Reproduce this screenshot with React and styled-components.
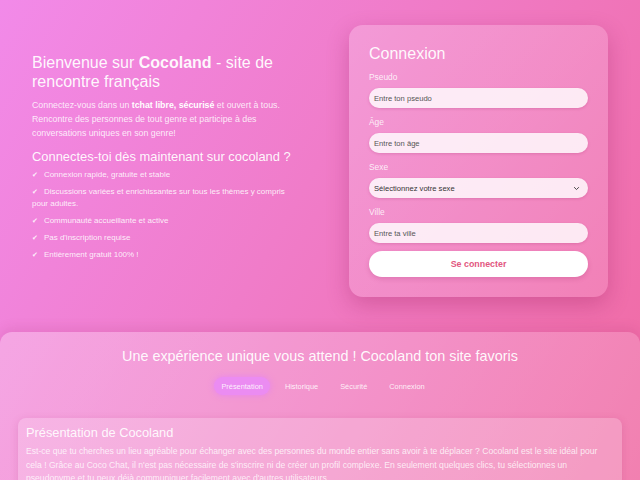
import React from "react";
import styled, { createGlobalStyle } from "styled-components";

const Global = createGlobalStyle`
  html, body { margin: 0; padding: 0; }
  body {
    font-family: "Liberation Sans", Arial, sans-serif;
    background: linear-gradient(120deg, #f28ae9 0%, #f07cc9 45%, #f06aa2 100%);
    background-attachment: fixed;
    min-height: 100vh;
    color: #fff;
    overflow: hidden;
  }
  * { box-sizing: border-box; }
`;

const Page = styled.div`
  width: 640px;
  min-height: 480px;
`;

const Hero = styled.section`
  display: flex;
  justify-content: space-between;
  align-items: flex-start;
  padding: 25px 32px 35px 32px;
`;

const Intro = styled.div`
  width: 262px;
  margin-top: 28px;
`;

const Title = styled.h1`
  margin: 0 0 7px;
  font-size: 16px;
  line-height: 19px;
  font-weight: 400;
  white-space: nowrap;
  color: rgba(255, 255, 255, 0.95);
  b { font-weight: 700; }
`;

const Lead = styled.p`
  margin: 0 0 8px;
  font-size: 8.8px;
  line-height: 14px;
  color: rgba(255, 255, 255, 0.85);
  b { font-weight: 700; color: #fff; }
`;

const SubTitle = styled.h2`
  margin: 0 0 3px;
  font-size: 12.9px;
  line-height: 18px;
  font-weight: 400;
  white-space: nowrap;
  color: rgba(255, 255, 255, 0.95);
`;

const List = styled.ul`
  list-style: none;
  margin: 0;
  padding: 0;
  display: flex;
  flex-direction: column;
  gap: 5px;
`;

const Item = styled.li`
  font-size: 8px;
  line-height: 12px;
  color: rgba(255, 255, 255, 0.88);
  &::before {
    content: "✔";
    margin-right: 6px;
    font-family: "DejaVu Sans", sans-serif;
    font-size: 7px;
  }
`;

const Card = styled.div`
  width: 259px;
  padding: 19px 20px 20px;
  border-radius: 14px;
  background: linear-gradient(135deg, rgba(255,255,255,0.22), rgba(255,255,255,0.12));
  box-shadow: 0 8px 22px rgba(150, 30, 90, 0.3);
`;

const CardTitle = styled.h2`
  margin: 0 0 8px;
  font-size: 16px;
  line-height: 20px;
  font-weight: 400;
  color: rgba(255, 255, 255, 0.95);
`;

const Form = styled.form`
  display: flex;
  flex-direction: column;
`;

const Label = styled.label`
  font-size: 8.4px;
  line-height: 10px;
  color: rgba(255, 255, 255, 0.85);
  margin: ${(p) => (p.$first ? "0" : "9px")} 0 6px;
`;

const Field = styled.div`
  height: 20px;
  border-radius: 10px;
  background: rgba(255, 255, 255, 0.82);
  box-shadow: 0 1px 3px rgba(150, 30, 90, 0.2);
  display: flex;
  align-items: center;
  justify-content: space-between;
  padding: 0 8px 0 5px;
  font-size: 7.6px;
  color: ${(p) => (p.$select ? "#333" : "#555")};
`;

const Chevron = styled.svg`
  width: 7px;
  height: 7px;
`;

const Button = styled.button`
  margin-top: 8px;
  height: 26px;
  border: none;
  border-radius: 13px;
  background: #fff;
  color: #e2577f;
  font-family: "Liberation Sans", Arial, sans-serif;
  font-weight: 700;
  font-size: 8.9px;
  box-shadow: 0 2px 5px rgba(150, 30, 90, 0.2);
`;

const Section = styled.section`
  border-radius: 12px 12px 0 0;
  background: linear-gradient(120deg, rgba(255,255,255,0.28), rgba(255,255,255,0.15));
  box-shadow: 0 -4px 12px rgba(150, 30, 90, 0.12);
  padding: 14px 18px 0;
  height: 148px;
  overflow: hidden;
`;

const SectionTitle = styled.h2`
  margin: 0;
  text-align: center;
  font-size: 14.4px;
  line-height: 20px;
  font-weight: 400;
  color: rgba(255, 255, 255, 0.95);
`;

const Tabs = styled.div`
  display: flex;
  justify-content: center;
  gap: 8px;
  margin: 11px 0 23px;
  padding-left: 6px;
`;

const Tab = styled.div`
  height: 18px;
  padding: 0 7px;
  border-radius: 9px;
  display: flex;
  align-items: center;
  font-size: 7.4px;
  color: rgba(255, 255, 255, 0.88);
  background: ${(p) => (p.$active ? "#eb8cf2" : "transparent")};
  box-shadow: ${(p) => (p.$active ? "0 0 6px rgba(230, 130, 245, 0.9)" : "none")};
`;

const Panel = styled.div`
  border-radius: 8px 8px 0 0;
  background: rgba(255, 255, 255, 0.2);
  box-shadow: 0 2px 8px rgba(150, 30, 90, 0.15);
  padding: 6px 8px 8px;
`;

const PanelTitle = styled.h3`
  margin: 0 0 3px;
  font-size: 12.8px;
  line-height: 18px;
  font-weight: 400;
  color: rgba(255, 255, 255, 0.92);
`;

const PanelText = styled.p`
  margin: 0;
  font-size: 8.6px;
  line-height: 13.5px;
  color: rgba(255, 255, 255, 0.8);
`;

export default function App() {
  return (
    <Page>
      <Global />
      <Hero>
        <Intro>
          <Title>
            Bienvenue sur <b>Cocoland</b> - site de
            <br />
            rencontre français
          </Title>
          <Lead>
            Connectez-vous dans un <b>tchat libre, sécurisé</b> et ouvert à tous.
            Rencontre des personnes de tout genre et participe à des
            conversations uniques en son genre!
          </Lead>
          <SubTitle>Connectes-toi dès maintenant sur cocoland ?</SubTitle>
          <List>
            <Item>Connexion rapide, gratuite et stable</Item>
            <Item>
              Discussions variées et enrichissantes sur tous les thèmes y compris
              pour adultes.
            </Item>
            <Item>Communauté accueillante et active</Item>
            <Item>Pas d'inscription requise</Item>
            <Item>Entièrement gratuit 100% !</Item>
          </List>
        </Intro>
        <Card>
          <CardTitle>Connexion</CardTitle>
          <Form onSubmit={(e) => e.preventDefault()}>
            <Label $first>Pseudo</Label>
            <Field>Entre ton pseudo</Field>
            <Label>Âge</Label>
            <Field>Entre ton âge</Field>
            <Label>Sexe</Label>
            <Field $select>
              Sélectionnez votre sexe
              <Chevron viewBox="0 0 10 10">
                <path d="M2 3.5 L5 6.5 L8 3.5" fill="none" stroke="#444" strokeWidth="1.4" strokeLinecap="round" strokeLinejoin="round" />
              </Chevron>
            </Field>
            <Label>Ville</Label>
            <Field>Entre ta ville</Field>
            <Button type="submit">Se connecter</Button>
          </Form>
        </Card>
      </Hero>
      <Section>
        <SectionTitle>Une expérience unique vous attend ! Cocoland ton site favoris</SectionTitle>
        <Tabs>
          <Tab $active>Présentation</Tab>
          <Tab>Historique</Tab>
          <Tab>Sécurité</Tab>
          <Tab>Connexion</Tab>
        </Tabs>
        <Panel>
          <PanelTitle>Présentation de Cocoland</PanelTitle>
          <PanelText>
            Est-ce que tu cherches un lieu agréable pour échanger avec des personnes du
            monde entier sans avoir à te déplacer ? Cocoland est le site idéal pour
            cela ! Grâce au Coco Chat, il n'est pas nécessaire de s'inscrire ni de créer
            un profil complexe. En seulement quelques clics, tu sélectionnes un
            pseudonyme et tu peux déjà communiquer facilement avec d'autres utilisateurs.
          </PanelText>
        </Panel>
      </Section>
    </Page>
  );
}
